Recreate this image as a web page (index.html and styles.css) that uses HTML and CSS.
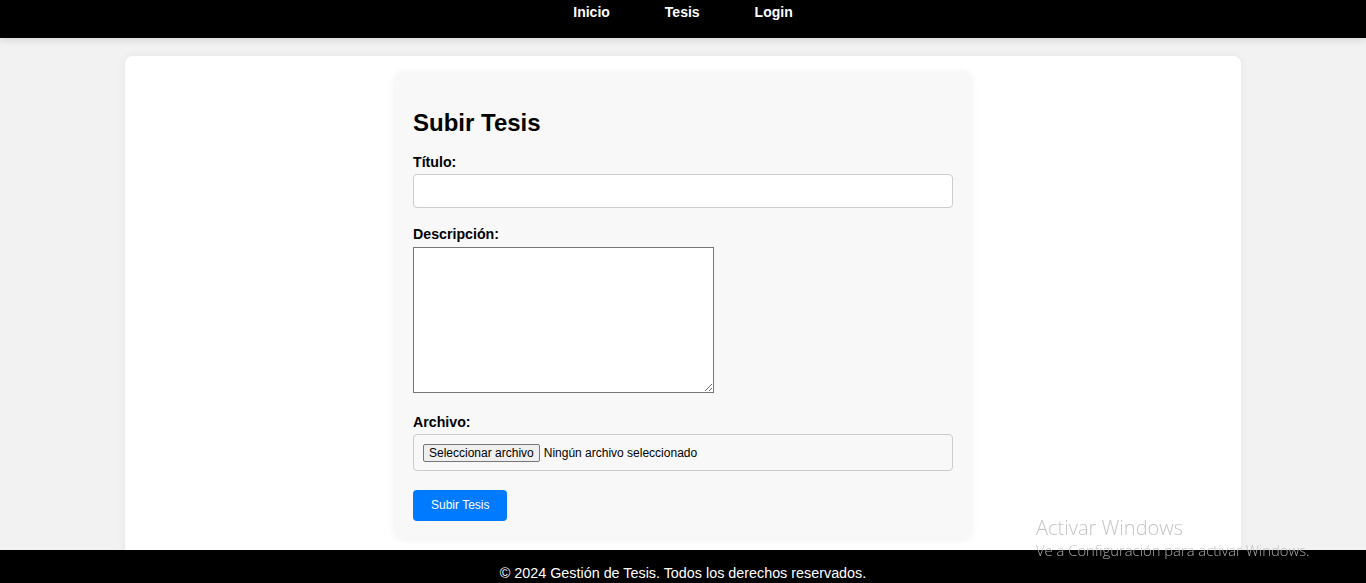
FILE: index.html
```html
<!DOCTYPE html>
<html lang="es">
<head>
<meta charset="utf-8">
<title>Subir Tesis</title>
<link rel="stylesheet" href="styles.css">
</head>
<body>
<header class="topbar">
  <nav class="nav">
    <a href="#" class="nav-link">Inicio</a>
    <a href="#" class="nav-link">Tesis</a>
    <a href="#" class="nav-link">Login</a>
  </nav>
</header>

<main class="container">
  <section class="card">
    <h2 class="card-title">Subir Tesis</h2>
    <form class="form">
      <label class="label" for="titulo">Título:</label>
      <input class="text-input" id="titulo" type="text">

      <label class="label label-desc" for="desc">Descripción:</label>
      <textarea class="textarea" id="desc"></textarea>

      <label class="label label-file">Archivo:</label>
      <div class="file-box">
        <span class="file-btn">Seleccionar archivo</span>
        <span class="file-name">Ningún archivo seleccionado</span>
      </div>

      <button type="button" class="submit">Subir Tesis</button>
    </form>
  </section>
</main>

<footer class="footer">© 2024 Gestión de Tesis. Todos los derechos reservados.</footer>

<div class="watermark">
  <div class="wm-title">Activar Windows</div>
  <div class="wm-sub">Ve a Configuración para activar Windows.</div>
</div>
</body>
</html>
```

FILE: styles.css
```css
* { box-sizing: border-box; }

html, body {
  margin: 0;
  padding: 0;
}

body {
  background: #f2f2f2;
  font-family: "Liberation Sans", Arial, sans-serif;
  color: #000;
  overflow: hidden;
  height: 583px;
}

.topbar {
  background: #000;
  height: 38px;
  box-shadow: 0 2px 8px rgba(0, 0, 0, 0.12);
  position: relative;
  z-index: 2;
}

.nav {
  display: flex;
  justify-content: center;
  gap: 55px;
  padding-top: 4px;
}

.nav-link {
  color: #fff;
  font-weight: bold;
  font-size: 14px;
  line-height: 16px;
  text-decoration: none;
}

.container {
  width: 1116px;
  margin: 18px auto 0;
  background: #fff;
  border-radius: 8px;
  box-shadow: 0 0 10px rgba(0, 0, 0, 0.06);
  padding: 16px 0 30px;
}

.card {
  width: 576px;
  margin: 0 auto;
  background: #f8f8f8;
  border-radius: 8px;
  box-shadow: 0 1px 8px rgba(0, 0, 0, 0.07);
  padding: 18px 18px 17px;
}

.card-title {
  font-size: 24px;
  font-weight: bold;
  line-height: 28px;
  margin: 19px 0 17px;
}

.form {
  display: flex;
  flex-direction: column;
  align-items: flex-start;
}

.label {
  display: block;
  font-size: 14.2px;
  font-weight: bold;
  line-height: 16px;
  margin-bottom: 4px;
}

.label-desc { margin-top: 18px; margin-bottom: 5px; }
.label-file { margin-top: 21px; margin-bottom: 4px; }

.text-input {
  width: 100%;
  height: 34px;
  border: 1px solid #ccc;
  border-radius: 4px;
  background: #fff;
  font-family: inherit;
  font-size: 14px;
  padding: 6px 8px;
  margin: 0;
}

.textarea {
  display: block;
  width: 301px;
  height: 146px;
  border: 1px solid #767676;
  border-radius: 0;
  background: #fff;
  padding: 2px;
  margin: 0;
  font-family: "Liberation Mono", monospace;
  font-size: 13px;
}

.file-box {
  width: 100%;
  height: 37px;
  border: 1px solid #ccc;
  border-radius: 4px;
  padding: 9px 9px 0;
  display: flex;
  align-items: flex-start;
  font-size: 12px;
}

.file-btn {
  display: inline-block;
  height: 18px;
  line-height: 16px;
  padding: 0 5px;
  border: 1px solid #767676;
  border-radius: 2px;
  background: #efefef;
  font-size: 12px;
  color: #000;
}

.file-name {
  margin-left: 4px;
  line-height: 18px;
  font-size: 12px;
}

.submit {
  margin-top: 19px;
  background: #007bff;
  color: #fff;
  border: none;
  border-radius: 4px;
  font-family: inherit;
  font-size: 12px;
  line-height: 15px;
  padding: 8px 18px;
  cursor: pointer;
}

.footer {
  position: fixed;
  left: 0;
  right: 0;
  bottom: 0;
  height: 33px;
  background: #000;
  color: #fff;
  font-size: 14.35px;
  line-height: 16px;
  text-align: center;
  padding-top: 15px;
  z-index: 3;
}

.watermark {
  position: fixed;
  left: 1036px;
  top: 515px;
  z-index: 4;
  font-family: "Open Sans", "Noto Sans", sans-serif;
  color: rgba(190, 190, 190, 0.9);
  pointer-events: none;
}

.wm-title {
  font-size: 20px;
  line-height: 26px;
  font-weight: 300;
}

.wm-sub {
  font-size: 14.8px;
  line-height: 19px;
  font-weight: 300;
}
```
